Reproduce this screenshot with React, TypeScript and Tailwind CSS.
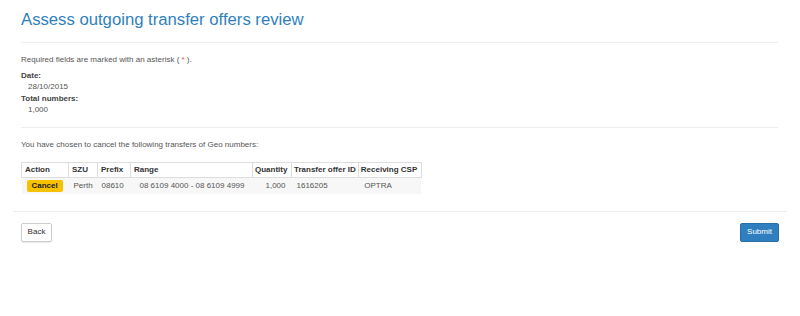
import React from "react";

const rows = [
  {
    szu: "Perth",
    prefix: "08610",
    range: "08 6109 4000 - 08 6109 4999",
    quantity: "1,000",
    offerId: "1616205",
    csp: "OPTRA",
  },
];

export default function App() {
  return (
    <div className="w-[800px] h-[316px] bg-white font-['Liberation_Sans',Arial,sans-serif] text-[8px] leading-[11.5px] text-[#555]">
      <div className="px-[13px]">
        <div className="px-[8px]">
          <h1 className="pt-[10px] text-[16.7px] leading-[20px] text-[#2f7fc0] font-normal">
            Assess outgoing transfer offers review
          </h1>
          <div className="mt-[12px] h-px bg-[#eeeeee] mr-[1px]" />

          <p className="mt-[11px]">
            Required fields are marked with an asterisk ( <span className="text-[#d9534f]">*</span> ).
          </p>
          <dl className="mt-[4px]">
            <dt className="font-bold text-[#444]">Date:</dt>
            <dd className="pl-[7px]">28/10/2015</dd>
            <dt className="font-bold text-[#444]">Total numbers:</dt>
            <dd className="pl-[7px]">1,000</dd>
          </dl>
          <div className="mt-[11px] h-px bg-[#eeeeee] mr-[1px]" />

          <p className="mt-[11px]">You have chosen to cancel the following transfers of Geo numbers:</p>

          <table className="mt-[12px] border-collapse text-left whitespace-nowrap">
            <thead>
              <tr className="border border-[#dddddd] text-[#333] font-bold">
                <th className="w-[47px] h-[15px] px-[3px] border-r border-[#dddddd]">Action</th>
                <th className="w-[29px] px-[3px] border-r border-[#dddddd]">SZU</th>
                <th className="w-[33px] px-[3px] border-r border-[#dddddd]">Prefix</th>
                <th className="w-[122px] px-[3px] border-r border-[#dddddd]">Range</th>
                <th className="w-[39px] px-[2px] border-r border-[#dddddd]">Quantity</th>
                <th className="w-[66px] px-[2px] border-r border-[#dddddd]">Transfer offer ID</th>
                <th className="w-[63px] px-[2px] border-r border-[#dddddd]">Receiving CSP</th>
              </tr>
            </thead>
            <tbody>
              {rows.map((r) => (
                <tr key={r.offerId} className="bg-[#f7f7f7] h-[16px]">
                  <td className="px-[5px]">
                    <span className="inline-block rounded-[2px] bg-[#f6c200] px-[5px] leading-[12px] font-bold text-[#222]">
                      Cancel
                    </span>
                  </td>
                  <td className="pl-[5px]">{r.szu}</td>
                  <td className="pl-[4px]">{r.prefix}</td>
                  <td className="pl-[9px]">{r.range}</td>
                  <td className="pr-[6px] text-right">{r.quantity}</td>
                  <td className="pl-[5px]">{r.offerId}</td>
                  <td className="pl-[6px]">{r.csp}</td>
                </tr>
              ))}
            </tbody>
          </table>
        </div>

        <div className="mt-[17px] h-px bg-[#eeeeee]" />

        <div className="mt-[11px] px-[8px] flex justify-between">
          <button className="h-[19px] w-[31px] rounded-[2px] border border-[#cccccc] bg-white text-[#333] shadow-[0_1px_1px_rgba(0,0,0,0.08)]">
            Back
          </button>
          <button className="h-[19px] w-[39px] rounded-[2px] border border-[#2a6ea8] bg-[#2f7fc0] text-white">
            Submit
          </button>
        </div>
      </div>
    </div>
  );
}
